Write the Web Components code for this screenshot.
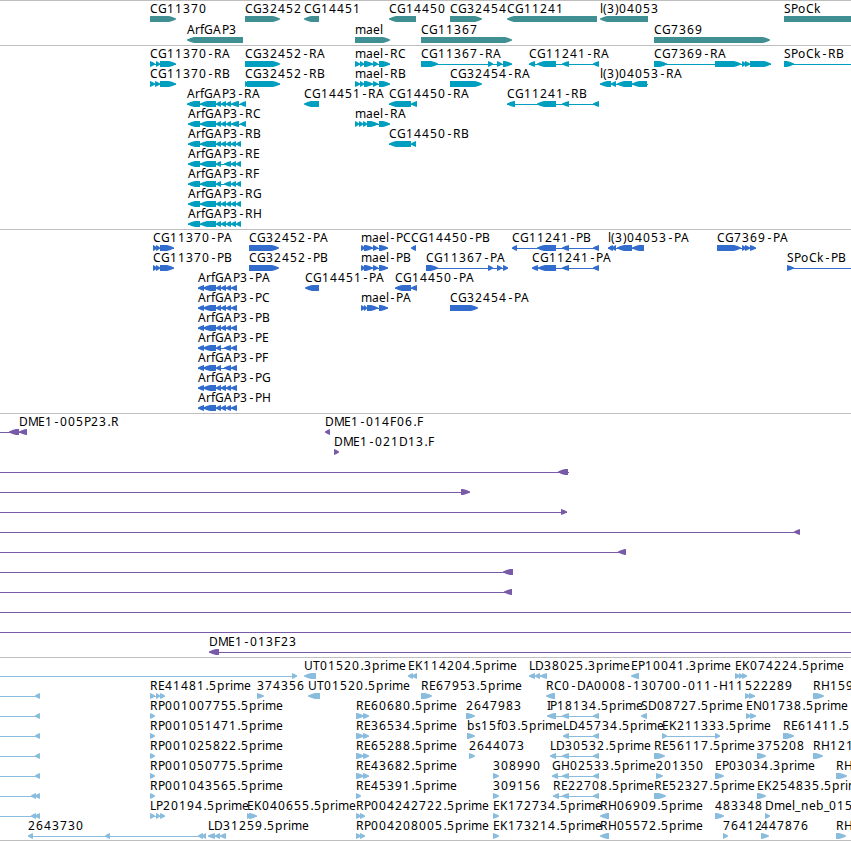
<!DOCTYPE html>
<html lang="en">
<head>
<meta charset="utf-8">
<title>Genome tracks</title>
<style>
  body {
    margin: 0;
    background: #fff;
    overflow: hidden;
    font-family: "Noto Sans", "Open Sans", sans-serif;
    font-size: 12px;
  }
</style>
</head>
<body>
<genome-browser></genome-browser>

<script>
// One feature per line: label, direction (< or >), exon ranges.
// "~" adds a connector to a position outside the exons, "@" moves the label.
// Lanes are separated by blank lines.
const GENES = `
CG11370 > 150-176
CG32452 > 245-280
CG14451 < 304-319
CG14450 < 389-416
CG32454 > 450-482
CG11241 < 507-597
l(3)04053 < 600-648
SPoCk > 784-870

ArfGAP3 < 187-243
mael > 355-390
CG11367 > 421-512
CG7369 > 654-770`;

const TRANSCRIPTS = `
CG11370-RA > 150-155 156-160 160-176
CG32452-RA > 245-280
mael-RC > 355-360 360-364 364-373 373-378 379-390
CG11367-RA > 421-438 488-493 497-502 503-512
CG11241-RA < 529-535 537-556 562-569 593-599
CG7369-RA > 654-667 715-741 742-746 745-750 750-771
SPoCk-RB > 784-794 ~870

CG11370-RB > 150-155 155-160 160-176
CG32452-RB > 245-249 247-280
mael-RB > 355-360 360-364 364-373 373-378 379-390
CG32454-RA > 450-482
l(3)04053-RA < 600-611 611-616 617-632 632-647 ~648

ArfGAP3-RA < 187-200 200-216 216-221 221-226 226-231 231-239 240-246
CG14451-RA < 304-319
CG14450-RA < 389-411 411-417
CG11241-RB < 507-515 537-556 562-569 593-599

ArfGAP3-RC < 188-200 200-216 216-221 221-226 226-231 231-239 240-246
mael-RA > 355-359 359-363 363-367 367-378 379-390

ArfGAP3-RB < 188-200 200-216 216-221 221-226 226-231 231-236 236-241
CG14450-RB < 389-411 411-416

ArfGAP3-RE < 188-200 200-216 216-221 224-231 231-236 236-241

ArfGAP3-RF < 188-200 200-216 216-221 224-231 231-236 236-241

ArfGAP3-RG < 188-200 200-216 216-221 221-226 226-231 231-236 236-241

ArfGAP3-RH < 188-200 200-216 216-221 221-226 226-231 231-236 236-241`;

const PROTEINS = `
CG11370-PA > 153-157 156-160 160-174
CG32452-PA > 249-279
mael-PC > 361-365 364-373 373-378 379-388
CG14450-PB < 411-416
CG11241-PB < 512-517 537-556 562-569 593-599
l(3)04053-PA < 608-613 612-616 617-632 632-644
CG7369-PA > 717-741 742-746 745-750 750-756

CG11370-PB > 153-157 156-160 160-174
CG32452-PB > 249-279
mael-PB > 361-365 364-373 373-378 379-388
CG11367-PA > 426-438 488-493 497-502 503-508
CG11241-PA < 532-538 538-556 562-569 593-599
SPoCk-PB > 787-794 ~870

ArfGAP3-PA < 198-204 203-216 216-221 221-226 226-231 231-237
CG14451-PA < 305-319
CG14450-PA < 395-411 411-417

ArfGAP3-PC < 198-204 203-216 216-221 221-226 226-231 231-237
mael-PA > 361-365 364-367 367-378 379-388
CG32454-PA > 450-478

ArfGAP3-PB < 198-204 203-216 216-221 221-226 226-231 231-237

ArfGAP3-PE < 198-204 203-216 216-221 224-231 231-237

ArfGAP3-PF < 198-204 203-216 216-221 224-231 231-237

ArfGAP3-PG < 198-204 203-216 216-221 221-226 226-231 231-237

ArfGAP3-PH < 198-204 203-216 216-221 221-226 226-231 231-237`;

const CLONES = `
DME1-005P23.R < ~-9 9-19 19-27 @19
DME1-014F06.F < 325-330

DME1-021D13.F > 334-339

. < ~-9 558-568 ~569

. > ~-9 461-470

. > ~-9 561-567

. < ~-9 794-800

. < ~-9 618-626

. < ~-9 503-513

. < ~-9 504-512

. < ~-9 ~870

. < ~-9 ~870

DME1-013F23 < 209-219 ~870`;

const ESTS = `
. > ~-9 292-297
UT01520.3prime < 304-316
EK114204.5prime < 408-413 412-417
LD38025.3prime < 529-535 535-540 540-547
EP10041.3prime < 631-639
EK074224.5prime > 735-740 739-743 742-747

. < ~-9 35-40
RE41481.5prime > 150-155 156-160 160-165
374356 > 257-264
UT01520.5prime < 308-320
RE67953.5prime > 421-432
RC0-DA0008-130700-011-H11 < 546-555
522289 > 745-750 749-755
RH159 > 813-824

. < ~-9 35-40
RP001007755.5prime > 150-155
RE60680.5prime > 356-364 363-369
2647983 > 466-475
IP18134.5prime < 547-556 562-569 593-599
SD08727.5prime < 641-647
EN01738.5prime > 746-751 750-756

. < ~-9 35-40
RP001051471.5prime > 150-155
RE36534.5prime > 356-364 363-369
bs15f03.5prime > 467-475
LD45734.5prime < 563-569 593-599
EK211333.5prime > 662-667 715-720
RE61411.5 > 783-794

. < ~-9 35-40
RP001025822.5prime > 150-155
RE65288.5prime > 356-364 363-369
2644073 > 469-475
LD30532.5prime < 550-556 562-569 593-599
RE56117.5prime > 654-665
375208 > 757-766
RH121 > 813-823

. < ~-9 35-40
RP001050775.5prime > 150-155
RE43682.5prime > 356-364 363-369
308990 > 493-499
GH02533.5prime < 552-558 562-569 593-599
201350 > 656-663
EP03034.3prime > 715-724
RH > 836-847

. < ~-9 31-36 35-40
RP001043565.5prime > 150-155
RE45391.5prime > 356-361
309156 > 493-499
RE22708.5prime < 553-559 562-569 593-599
RE52327.5prime > 654-666
EK254835.5prim > 757-766

. < ~-9 31-36 35-40
LP20194.5prime > 150-155 156-160 160-165
EK040655.5prime > 247-251 249-257
RP004242722.5prime > 356-361 360-365
EK172734.5prime > 493-499
RH06909.5prime < 600-609
483348 > 715-724
Dmel_neb_015 > 765-770

2643730 < 28-33 105-110 198-203 202-206
LD31259.5prime < 208-215 215-220 220-226
RP004208005.5prime > 356-361 360-365
EK173214.5prime > 493-499
RH05572.5prime < 600-609
76412 > 723-728
447876 > 761-769
RH > 836-846`;

const WIDTH = 851;

// Advance of each label character in pixels; digits are 8
const ADVANCE = {
  A: 8.3, B: 7.5, C: 8, D: 9, E: 7, F: 6.5, G: 9, H: 9, I: 3, K: 8, L: 6, M: 10,
  N: 9, P: 7, R: 8, S: 7, T: 7, U: 9, a: 7, b: 8, e: 7, f: 4, i: 3, k: 7, l: 3,
  m: 11, n: 8, o: 7.5, p: 8, r: 5, s: 6, '-': 7, '.': 4, '(': 4, ')': 4, _: 5.5,
};

// Narrow glyphs are nudged towards the middle of their cell
const NUDGE = { '-': 1.5, '.': 0.5 };

class TrackLane extends HTMLElement {
  constructor() {
    super();
    this.attachShadow({ mode: 'open' });
    this.features = [];
  }

  connectedCallback() {
    this.shadowRoot.innerHTML = `
      <style>
        :host { display: block; height: var(--lane-height, 20px); }
        svg { display: block; fill: var(--track-color); overflow: hidden; }
        text { fill: #000; white-space: pre; }
      </style>
      <svg width="${WIDTH}" height="21">
        ${this.features.map((f) => this.drawFeature(f)).join('')}
      </svg>
    `;
  }

  drawFeature(line) {
    const [label, direction, ...parts] = line.split(' ');
    const exons = parts.filter((p) => /^\d/.test(p)).map((p) => p.split('-').map(Number));
    const ends = parts.filter((p) => p[0] === '~').map((p) => Number(p.slice(1)));
    const moved = parts.find((p) => p[0] === '@');
    const all = exons.flat().concat(ends);
    const start = Math.min(...all);
    const end = Math.max(...all);

    let out = '';
    if (exons.length !== 1 || ends.length) {
      out += `<rect x="${start}" y="18" width="${end - start}" height="1"/>`;
    }
    out += exons.map(([a, b]) => this.drawExon(a, b, direction)).join('');
    if (label !== '.') {
      out += this.drawLabel(label, moved ? Number(moved.slice(1)) : start);
    }
    return out;
  }

  drawExon(a, b, direction) {
    const tip = Math.min(b - a, 7);
    const half = tip / 2;
    if (direction === '<') {
      return `<path d="M${b} 15V21H${a + tip}L${a + half} 20L${a} 18.5V17.5L${a + half} 16L${a + tip} 15Z"/>`;
    }
    return `<path d="M${a} 15V21H${b - tip}L${b - half} 20L${b} 18.5V17.5L${b - half} 16L${b - tip} 15Z"/>`;
  }

  drawLabel(label, x) {
    const xs = [];
    let pos = x;
    for (const ch of label) {
      xs.push(Math.round(pos) + (NUDGE[ch] || 0));
      pos += ADVANCE[ch] || 8;
    }
    return `<text x="${xs.join(' ')}" y="12">${label}</text>`;
  }
}

class GenomeTrack extends HTMLElement {
  constructor() {
    super();
    this.attachShadow({ mode: 'open' });
    this.data = '';
  }

  connectedCallback() {
    this.shadowRoot.innerHTML = `
      <style>
        :host {
          display: flex;
          flex-direction: column;
          border-top: 1px solid #bebebe;
          padding-bottom: var(--track-gap, 3px);
        }
      </style>
    `;
    this.data.trim().split('\n\n').forEach((lane) => {
      const el = document.createElement('track-lane');
      el.features = lane.split('\n');
      this.shadowRoot.appendChild(el);
    });
  }
}

class GenomeBrowser extends HTMLElement {
  constructor() {
    super();
    this.attachShadow({ mode: 'open' });
  }

  connectedCallback() {
    this.shadowRoot.innerHTML = `
      <style>
        :host {
          display: flex;
          flex-direction: column;
          width: ${WIDTH}px;
          border-bottom: 1px solid #bebebe;
        }
        .genes { --track-color: #3f8f93; --lane-height: 21px; --track-gap: 2px; }
        .transcripts { --track-color: #009fc0; }
        .proteins { --track-color: #326ccd; }
        .clones { --track-color: #785aa8; }
        .ests { --track-color: #8abddd; --track-gap: 2px; }
      </style>
    `;
    const tracks = {
      genes: GENES,
      transcripts: TRANSCRIPTS,
      proteins: PROTEINS,
      clones: CLONES,
      ests: ESTS,
    };
    Object.entries(tracks).forEach(([name, data]) => {
      const el = document.createElement('genome-track');
      el.className = name;
      el.data = data;
      this.shadowRoot.appendChild(el);
    });
  }
}

customElements.define('track-lane', TrackLane);
customElements.define('genome-track', GenomeTrack);
customElements.define('genome-browser', GenomeBrowser);
</script>
</body>
</html>
